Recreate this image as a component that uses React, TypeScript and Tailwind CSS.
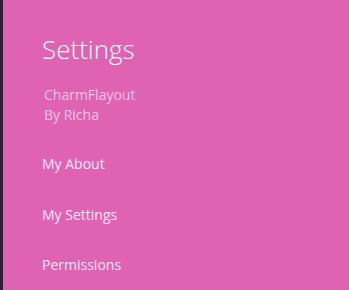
const ITEMS = ['My About', 'My Settings', 'Permissions'];

export default function App() {
  return (
    <div className="flex h-[290px] w-[349px] overflow-hidden bg-[#e062b2] font-['Segoe_UI','Open_Sans',sans-serif]">
      <div className="w-[3px] shrink-0 bg-[#2b2230]" />
      <div className="flex-1 pl-[39px] pt-[31px]">
        <h1 className="text-[26px] font-light leading-[36px] text-white">Settings</h1>
        <div className="mt-[18px] pl-[2px] text-[14px] leading-[20px] text-[#f7c4e6]">
          <p>CharmFlayout</p>
          <p>By Richa</p>
        </div>
        <ul className="mt-[29px] text-[14px] leading-[20px] text-[#fde9f6]">
          {ITEMS.map((t) => (
            <li key={t} className="h-[50.5px]">
              {t}
            </li>
          ))}
        </ul>
      </div>
    </div>
  );
}
